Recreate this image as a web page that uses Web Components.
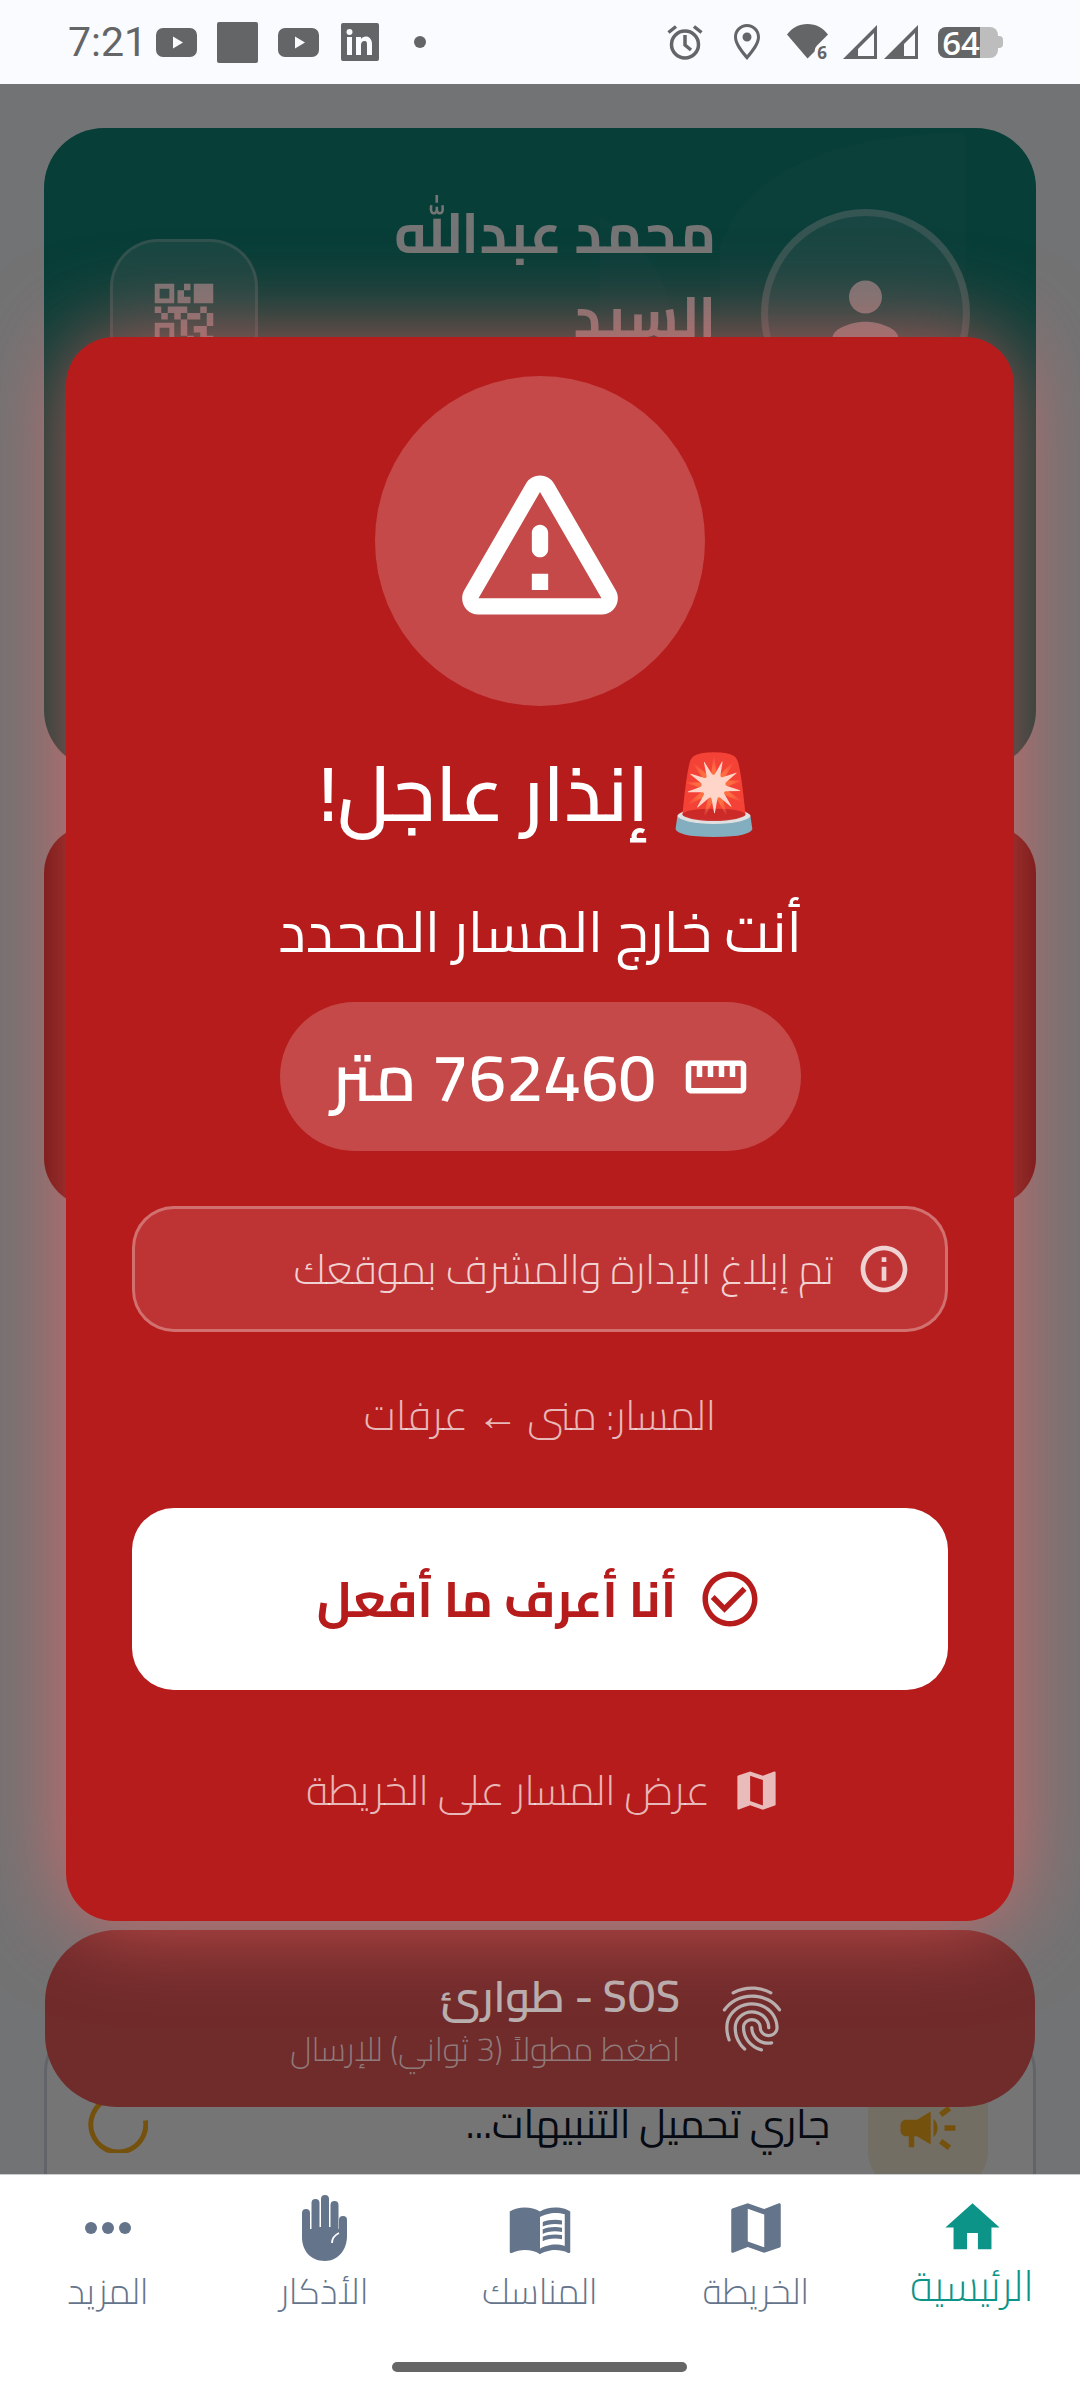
<!doctype html>
<html lang="ar" dir="rtl">
<head>
<meta charset="utf-8">
<title>إنذار عاجل</title>
<style>
  html, body { margin: 0; padding: 0; }
  body {
    width: 1080px;
    height: 2400px;
    display: flex;
    flex-direction: column;
    overflow: hidden;
    background: #fff;
    font-family: "Cairo", "Noto Sans Arabic", "Noto Sans", sans-serif;
  }
  svg { display: block; fill: currentColor; }
</style>
</head>
<body>

<status-bar></status-bar>

<app-main>
  <home-screen>
    <hero-card slot="top"></hero-card>
    <div slot="top" style="height:381px;margin-top:55px;border-radius:48px;background:#c91e18"></div>
    <alert-card slot="bottom"></alert-card>
  </home-screen>
  <alarm-overlay>
    <alarm-modal></alarm-modal>
    <sos-bar></sos-bar>
  </alarm-overlay>
</app-main>

<bottom-nav>
  <nav-item label="الرئيسية" active>
    <svg width="65" height="65" viewBox="0 0 24 24"><path d="M10 20v-6h4v6h5v-8h3L12 3 2 12h3v8z"/></svg>
  </nav-item>
  <nav-item label="الخريطة">
    <svg width="66" height="66" viewBox="0 0 24 24"><path d="M20.5 3l-.16.03L15 5.1 9 3 3.36 4.9c-.21.07-.36.25-.36.48V20.5c0 .28.22.5.5.5l.16-.03L9 18.9l6 2.1 5.64-1.9c.21-.07.36-.25.36-.48V3.5c0-.28-.22-.5-.5-.5zM15 19l-6-2.11V5l6 2.11V19z"/></svg>
  </nav-item>
  <nav-item label="المناسك">
    <svg width="66" height="66" viewBox="0 0 24 24"><path d="M21 5c-1.11-.35-2.33-.5-3.5-.5-1.95 0-4.05.4-5.5 1.5-1.45-1.1-3.55-1.5-5.5-1.5S2.45 4.9 1 6v14.65c0 .25.25.5.5.5.1 0 .15-.05.25-.05C3.1 20.45 5.05 20 6.5 20c1.95 0 4.05.4 5.5 1.5 1.35-.85 3.8-1.5 5.5-1.5 1.65 0 3.35.3 4.75 1.05.1.05.15.05.25.05.25 0 .5-.25.5-.5V6c-.6-.45-1.25-.75-2-1zm0 13.5c-1.1-.35-2.3-.5-3.5-.5-1.7 0-4.15.65-5.5 1.5V8c1.35-.85 3.8-1.5 5.5-1.5 1.2 0 2.4.15 3.5.5v11.5z"/><path d="M17.5 10.5c.88 0 1.73.09 2.5.26V9.24c-.79-.15-1.64-.24-2.5-.24-1.7 0-3.24.29-4.5.83v1.66c1.13-.64 2.7-.99 4.5-.99zM13 12.49v1.66c1.13-.64 2.7-.99 4.5-.99.88 0 1.73.09 2.5.26V11.9c-.79-.15-1.64-.24-2.5-.24-1.7 0-3.24.3-4.5.83zM17.5 14.33c-1.7 0-3.24.29-4.5.83v1.66c1.13-.64 2.7-.99 4.5-.99.88 0 1.73.09 2.5.26v-1.52c-.79-.16-1.64-.24-2.5-.24z"/></svg>
  </nav-item>
  <nav-item label="الأذكار">
    <svg width="66" height="66" viewBox="-11 0 66 66"><path d="M0 18a4 4 0 0 1 8 0v16h1.500V8a4 4 0 0 1 8 0v24h1.500V4a4 4 0 0 1 8 0v28h1.500V10a4 4 0 0 1 8 0v24l.5 0V25a4 4 0 0 1 8 0v16c0 14-9 25-22 25C8 66 0 55 0 42z"/><path d="M30 48c0-5 3-8 7-10" fill="none" stroke="#fff" stroke-width="1.800"/></svg>
  </nav-item>
  <nav-item label="المزيد">
    <svg width="66" height="66" viewBox="0 0 66 66"><circle cx="16" cy="33" r="6"/><circle cx="33" cy="33" r="6"/><circle cx="50" cy="33" r="6"/></svg>
  </nav-item>
</bottom-nav>

<script>
// small helper so every element is just: tag + template string
function defineEl(tag, html) {
  const tpl = document.createElement('template');
  tpl.innerHTML = html;
  customElements.define(tag, class extends HTMLElement {
    constructor() {
      super();
      this.attachShadow({ mode: 'open' });
      this.shadowRoot.appendChild(tpl.content.cloneNode(true));
    }
  });
}

defineEl('status-bar', `
  <style>
    :host {
      display: flex;
      flex: none;
      direction: ltr;
      justify-content: space-between;
      height: 84px;
      background: #fafbfe;
      color: #646566;
      font-family: "Roboto", sans-serif;
      padding: 0 77px 0 68px;
      box-sizing: border-box;
    }
    .side { display: flex; align-items: center; height: 84px; }
    svg { display: block; fill: currentColor; flex: none; overflow: visible; }
    .time { font-size: 41px; line-height: 84px; width: 88px; }
    .batt {
      position: relative;
      width: 60px;
      height: 31px;
      border-radius: 8px;
      margin-left: 20px;
      background: linear-gradient(90deg, #646566 42px, #bdbdbe 42px);
    }
    .batt span {
      display: block;
      text-align: center;
      width: 60px;
      margin-left: -7px;
      color: #fff;
      font: 600 33px/31px "Open Sans", sans-serif;
    }
    .nub { width: 5px; height: 12px; background: #bdbdbe; border-radius: 0 4px 4px 0; }
  </style>
  <div class="side">
    <span class="time">7:21</span>
    <svg width="41" height="29" viewBox="0 0 41 29" style="margin-right:20px"><path fill-rule="evenodd" d="M7 0h27a7 7 0 0 1 7 7v15a7 7 0 0 1-7 7H7a7 7 0 0 1-7-7V7a7 7 0 0 1 7-7zM17 8.500v12l10-6z"/></svg>
    <svg width="41" height="41" viewBox="0 0 41 41" style="margin-right:20px"><rect width="41" height="41" rx="2"/></svg>
    <svg width="41" height="29" viewBox="0 0 41 29" style="margin-right:22px"><path fill-rule="evenodd" d="M7 0h27a7 7 0 0 1 7 7v15a7 7 0 0 1-7 7H7a7 7 0 0 1-7-7V7a7 7 0 0 1 7-7zM17 8.500v12l10-6z"/></svg>
    <svg width="38" height="38" viewBox="0 0 38 38" style="margin-right:35px"><path fill-rule="evenodd" d="M2 0h34a2 2 0 0 1 2 2v34a2 2 0 0 1-2 2H2a2 2 0 0 1-2-2V2a2 2 0 0 1 2-2zM6 14v18h5V14zM8.500 6a3 3 0 1 0 0 6 3 3 0 0 0 0-6zM15 14v18h5V22c0-2 1-4 3.500-4S26 20 26 22v10h5V21c0-5-3-7.500-6-7.500-2.500 0-4 1-5 2.500v-2z"/></svg>
    <svg width="12" height="12" viewBox="0 0 12 12"><circle cx="6" cy="6" r="6"/></svg>
  </div>
  <div class="side">
    <svg width="36" height="36" viewBox="0 0 36 36" style="margin-right:31px"><g fill="none" stroke="currentColor" stroke-width="3.500"><circle cx="18" cy="20.500" r="13.500"/><path d="M18 11v10l6 5"/><path d="M1.500 8.500 9 2.500M34.500 8.500 27 2.500"/></g></svg>
    <svg width="26" height="36" viewBox="0 0 26 36" style="margin-right:27px"><path fill-rule="evenodd" d="M13 0c7 0 13 5.500 13 13 0 7-6 15-13 23C6 28 0 20 0 13 0 5.500 6 0 13 0zm0 3C7.500 3 3 7.500 3 13c0 5.500 5 12 10 18 5-6 10-12.500 10-18C23 7.500 18.500 3 13 3zm0 5.500a4.500 4.500 0 1 1 0 9 4.500 4.500 0 0 1 0-9z"/></svg>
    <svg width="41" height="36" viewBox="0 0 41 36" style="margin-right:15px"><path d="M0 10.500C5 4 12 0 20.500 0S36 4 41 10.500L30 21.500a8 8 0 0 0-2.500 6L20.500 34.500z"/><text x="35" y="35" font-family="Open Sans, sans-serif" font-size="17" font-weight="700" text-anchor="middle">6</text></svg>
    <svg width="34" height="34" viewBox="0 0 34 34" style="margin-right:7px"><path fill-rule="evenodd" d="M34 0v34H0zM31 8 15 24v7h16z"/></svg>
    <svg width="34" height="34" viewBox="0 0 34 34"><path fill-rule="evenodd" d="M34 0v34H0zM31 8 20 19v12h11z"/></svg>
    <div class="batt"><span>64</span></div>
    <div class="nub"></div>
  </div>
`);

defineEl('app-main', `
  <style>
    :host {
      display: block;
      flex: none;
      height: 2090px;
      position: relative;
      overflow: hidden;
      background: #f8fafc;
    }
  </style>
  <slot></slot>
`);

defineEl('home-screen', `
  <style>
    :host { display: flex; flex-direction: column; padding: 44px 44px 0; }
    .bottom { margin-top: 818px; }
  </style>
  <slot name="top"></slot>
  <div class="bottom"><slot name="bottom"></slot></div>
`);

defineEl('hero-card', `
  <style>
    :host {
      display: flex;
      align-items: flex-start;
      height: 642px;
      padding: 81px 66px 0;
      box-sizing: border-box;
      position: relative;
      overflow: hidden;
      border-radius: 60px;
      background: #10877b;
      color: #fff;
    }
    svg { display: block; fill: currentColor; }
    .decor { position: absolute; top: 0; left: 0; fill: rgba(255,255,255,.03); }
    .avatar {
      width: 209px;
      height: 209px;
      box-sizing: border-box;
      flex: none;
      display: flex;
      align-items: center;
      justify-content: center;
      border-radius: 50%;
      border: 7px solid rgba(255,255,255,.3);
      background: rgba(255,255,255,.14);
      position: relative;
    }
    .name {
      flex: 1;
      margin: -18px 45px 0 93px;
      font-size: 56px;
      font-weight: 700;
      line-height: 84px;
    }
    .qr {
      width: 148px;
      height: 148px;
      margin-top: 30px;
      flex: none;
      display: flex;
      align-items: center;
      justify-content: center;
      box-sizing: border-box;
      border-radius: 48px;
      border: 3px solid rgba(255,255,255,.25);
      background: rgba(255,255,255,.15);
      position: relative;
    }
  </style>
  <svg class="decor" width="992" height="642" viewBox="0 0 992 642"><path d="M556 642V90c30 10 75 60 75 120v432zM676 642V120C700 40 800 5 921 5v637z"/></svg>
  <div class="avatar"><svg width="99" height="99" viewBox="0 0 24 24"><path d="M12 12c2.210 0 4-1.790 4-4s-1.790-4-4-4-4 1.790-4 4 1.790 4 4 4zm0 2c-2.670 0-8 1.340-8 4v2h16v-2c0-2.660-5.330-4-8-4z"/></svg></div>
  <div class="name">محمد عبدالله السيد</div>
  <div class="qr"><svg width="78" height="78" viewBox="0 0 24 24"><path d="M15 21h-2v-2h2v2zm-2-7h-2v5h2v-5zm8-2h-2v4h2v-4zm-2-2h-2v2h2v-2zM7 12H5v2h2v-2zm-2-2H3v2h2v-2zm7-5h2V3h-2v2zm-7.500-.5v3h3v-3h-3zM9 9H3V3h6v6zm-4.500 10.500v-3h3v3h-3zM9 15H3v6h6v-6zm10.500-10.500v3h-3v-3h3zM21 9h-6V3h6v6zm-2 10v-3h-4v2h2v3h4v-2h-2zm-2-7h-4v2h4v-2zm-4-2H7v2h2v2h2v-2h2v-2zm1-1V7h-2V5h-2v4h4z"/></svg></div>
`);

defineEl('alert-card', `
  <style>
    :host {
      display: flex;
      align-items: center;
      height: 208px;
      padding: 0 45px 0 41px;
      box-sizing: border-box;
      border: 3px solid #d5dbe6;
      border-radius: 48px;
      background: #fff;
      gap: 38px;
    }
    svg { display: block; }
    .box {
      width: 120px;
      height: 120px;
      flex: none;
      display: flex;
      align-items: center;
      justify-content: center;
      border-radius: 36px;
      background: #f9f0d8;
      color: #ffb020;
    }
    .text { flex: 1; font-size: 40px; line-height: 66px; color: #0f172a; margin-top: -8px; }
    .spin { flex: none; margin-top: -10px; }
  </style>
  <div class="box"><svg width="66" height="66" viewBox="0 0 24 24" fill="currentColor"><path d="M18 11v2h4v-2h-4zm-2 6.610c.960.710 2.210 1.650 3.200 2.390.400-.530.800-1.070 1.200-1.600-.990-.740-2.240-1.680-3.200-2.400-.400.540-.800 1.080-1.200 1.610zM20.400 5.600c-.400-.530-.800-1.070-1.200-1.600-.990.740-2.240 1.680-3.200 2.400.400.530.800 1.070 1.200 1.600.960-.720 2.210-1.650 3.200-2.400zM4 9c-1.100 0-2 .9-2 2v2c0 1.100.9 2 2 2h1v4h2v-4h1l5 3V6L8 9H4zm11.500 3c0-1.330-.580-2.530-1.500-3.350v6.690c.920-.810 1.500-2.010 1.500-3.340z"/></svg></div>
  <div class="text">جاري تحميل التنبيهات...</div>
  <svg class="spin" width="60" height="60" viewBox="0 0 60 60"><path d="M19 6.500A27.500 27.500 0 1 0 57.500 27.500" fill="none" stroke="#ffb020" stroke-width="5"/></svg>
`);

defineEl('alarm-overlay', `
  <style>
    :host {
      position: absolute;
      top: 0;
      right: 0;
      bottom: 0;
      left: 0;
      display: flex;
      flex-direction: column;
      align-items: center;
      padding-top: 253px;
      box-sizing: border-box;
      background: rgba(0,0,0,.54);
    }
  </style>
  <slot></slot>
`);

defineEl('alarm-modal', `
  <style>
    :host {
      display: flex;
      flex-direction: column;
      align-items: center;
      width: 948px;
      padding: 39px 66px 101px;
      box-sizing: border-box;
      position: relative;
      z-index: 1;
      border-radius: 48px;
      background: #b71c1c;
      box-shadow: 0 0 90px rgba(255,100,100,.72);
      color: #fff;
    }
    svg { display: block; fill: currentColor; flex: none; }
    .circle {
      width: 330px;
      height: 330px;
      display: flex;
      align-items: center;
      justify-content: center;
      border-radius: 50%;
      background: rgba(255,255,255,.2);
    }
    h1 {
      margin: 42px 0 0;
      font-size: 77px;
      font-weight: 650;
      line-height: 90px;
    }
    .sub { margin-top: 54px; font-size: 57px; line-height: 80px; }
    .pill {
      margin-top: 30px;
      height: 149px;
      width: 521px;
      display: flex;
      align-items: center;
      justify-content: center;
      gap: 27px;
      border-radius: 75px;
      background: rgba(255,255,255,.2);
      font-size: 67px;
      font-weight: 650;
    }
    .info {
      margin-top: 55px;
      width: 100%;
      height: 126px;
      display: flex;
      align-items: center;
      gap: 22px;
      padding: 0 33px;
      box-sizing: border-box;
      border: 3px solid rgba(255,255,255,.3);
      border-radius: 42px;
      background: rgba(255,255,255,.1);
      color: rgba(255,255,255,.78);
      font-size: 41.500px;
      font-weight: 300;
    }
    .route { margin-top: 53px; font-size: 41.500px; font-weight: 300; line-height: 60px; color: rgba(255,255,255,.7); }
    .ok {
      margin-top: 63px;
      width: 100%;
      height: 182px;
      display: flex;
      align-items: center;
      justify-content: center;
      gap: 21px;
      border-radius: 42px;
      background: #fff;
      color: #b71c1c;
      font-size: 49.500px;
      font-weight: 700;
    }
    .link {
      margin-top: 70px;
      height: 60px;
      display: flex;
      align-items: center;
      justify-content: center;
      gap: 21px;
      padding-left: 8px;
      color: rgba(255,255,255,.7);
      font-size: 41.500px;
      font-weight: 300;
    }
  </style>
  <div class="circle"><svg width="196" height="196" viewBox="0 0 24 24"><path fill-rule="evenodd" d="M12 5.990 19.530 19H4.470L12 5.990M2.740 18c-.770 1.330.190 3 1.730 3h15.060c1.540 0 2.500-1.670 1.730-3L13.730 4.990c-.770-1.330-2.690-1.330-3.460 0L2.740 18zM11 11v2c0 .550.450 1 1 1s1-.450 1-1v-2c0-.550-.450-1-1-1s-1 .450-1 1zm0 5h2v2h-2z"/></svg></div>
  <h1>🚨 إنذار عاجل!</h1>
  <div class="sub">أنت خارج المسار المحدد</div>
  <div class="pill">
    <svg width="66" height="66" viewBox="0 0 24 24"><path d="M21 6H3c-1.100 0-2 .9-2 2v8c0 1.100.9 2 2 2h18c1.100 0 2-.9 2-2V8c0-1.100-.9-2-2-2zm0 10H3V8h2v4h2V8h2v4h2V8h2v4h2V8h2v4h2V8h2v8z"/></svg>
    <span>762460 متر</span>
  </div>
  <div class="info">
    <svg width="56" height="56" viewBox="0 0 24 24"><path d="M11 7h2v2h-2zm0 4h2v6h-2zm1-9C6.480 2 2 6.480 2 12s4.480 10 10 10 10-4.480 10-10S17.520 2 12 2zm0 18c-4.410 0-8-3.590-8-8s3.590-8 8-8 8 3.590 8 8-3.590 8-8 8z"/></svg>
    <span>تم إبلاغ الإدارة والمشرف بموقعك</span>
  </div>
  <div class="route">المسار: منى ← عرفات</div>
  <div class="ok">
    <svg width="66" height="66" viewBox="0 0 24 24"><path d="M16.590 7.580 10 14.170l-3.590-3.580L5 12l5 5 8-8zM12 2C6.480 2 2 6.480 2 12s4.480 10 10 10 10-4.480 10-10S17.520 2 12 2zm0 18c-4.420 0-8-3.580-8-8s3.580-8 8-8 8 3.580 8 8-3.580 8-8 8z"/></svg>
    <span>أنا أعرف ما أفعل</span>
  </div>
  <div class="link">
    <svg width="51" height="51" viewBox="0 0 24 24"><path d="M20.500 3l-.16.03L15 5.100 9 3 3.360 4.900c-.21.07-.36.25-.36.48V20.500c0 .28.22.5.5.5l.16-.03L9 18.900l6 2.100 5.640-1.900c.21-.07.36-.25.36-.48V3.500c0-.28-.22-.5-.5-.5zM15 19l-6-2.110V5l6 2.110V19z"/></svg>
    <span>عرض المسار على الخريطة</span>
  </div>
`);

defineEl('sos-bar', `
  <style>
    :host {
      display: flex;
      align-items: center;
      gap: 33px;
      width: 990px;
      height: 177px;
      margin-top: 9px;
      padding: 0 244px 0 0;
      box-sizing: border-box;
      border-radius: 72px;
      background: #702b2b;
      color: #b8b0b0;
    }
    svg { display: block; fill: currentColor; flex: none; }
    .title { font-size: 44px; font-weight: 600; line-height: 60px; }
    .hint { font-size: 33px; font-weight: 300; line-height: 46px; color: #8f7a7a; }
  </style>
  <svg width="78" height="78" viewBox="0 0 24 24"><path d="M17.810 4.470c-.08 0-.16-.02-.23-.06C15.660 3.420 14 3 12.010 3c-1.980 0-3.860.47-5.570 1.410-.24.13-.54.04-.68-.2-.13-.24-.04-.55.2-.68C7.820 2.520 9.860 2 12.010 2c2.130 0 3.990.47 6.030 1.520.25.13.34.43.21.67-.09.18-.26.28-.44.28zM3.500 9.720c-.1 0-.2-.03-.29-.09-.23-.16-.28-.47-.12-.7.990-1.400 2.250-2.500 3.750-3.270C9.980 4.040 14 4.030 17.150 5.650c1.500.77 2.760 1.860 3.750 3.250.16.22.11.54-.12.7-.23.16-.54.11-.7-.12-.9-1.260-2.040-2.250-3.390-2.940-2.870-1.470-6.540-1.470-9.400.01-1.360.7-2.500 1.700-3.400 2.960-.08.14-.23.21-.39.21zm6.250 12.070c-.13 0-.26-.05-.35-.15-.87-.87-1.340-1.430-2.010-2.640-.69-1.230-1.050-2.730-1.050-4.340 0-2.970 2.540-5.390 5.660-5.390s5.660 2.420 5.660 5.390c0 .28-.22.5-.5.5s-.5-.22-.5-.5c0-2.420-2.090-4.390-4.660-4.390-2.570 0-4.660 1.970-4.660 4.390 0 1.440.32 2.770.93 3.850.64 1.150 1.080 1.640 1.850 2.420.19.2.19.51 0 .71-.11.1-.24.15-.37.15zm7.170-1.850c-1.190 0-2.240-.3-3.100-.89-1.490-1.010-2.380-2.650-2.380-4.390 0-.28.22-.5.5-.5s.5.22.5.5c0 1.410.72 2.740 1.940 3.560.71.48 1.540.71 2.540.71.24 0 .64-.03 1.040-.1.27-.05.53.13.58.41.05.27-.13.53-.41.58-.57.11-1.070.12-1.210.12zM14.910 22c-.04 0-.09-.01-.13-.02-1.590-.44-2.630-1.030-3.720-2.100-1.400-1.390-2.170-3.240-2.170-5.220 0-1.620 1.380-2.940 3.080-2.940 1.700 0 3.080 1.320 3.080 2.940 0 1.070.93 1.940 2.080 1.940s2.080-.87 2.080-1.940c0-3.770-3.250-6.830-7.250-6.830-2.840 0-5.440 1.580-6.610 4.030-.39.81-.59 1.760-.59 2.800 0 .78.07 2.010.67 3.610.1.26-.03.55-.29.64-.26.1-.55-.04-.64-.29-.49-1.310-.73-2.610-.73-3.960 0-1.200.23-2.290.68-3.240 1.330-2.790 4.280-4.600 7.510-4.600 4.550 0 8.250 3.510 8.250 7.830 0 1.620-1.380 2.940-3.080 2.940s-3.080-1.320-3.080-2.940c0-1.070-.93-1.940-2.080-1.940s-2.080.87-2.080 1.940c0 1.710.66 3.310 1.870 4.510.95.94 1.860 1.460 3.270 1.850.27.07.42.35.35.61-.05.23-.26.38-.47.38z"/></svg>
  <div>
    <div class="title">SOS - طوارئ</div>
    <div class="hint">اضغط مطولاً (3 ثواني) للإرسال</div>
  </div>
`);

defineEl('bottom-nav', `
  <style>
    :host {
      display: flex;
      flex: 1;
      position: relative;
      align-items: flex-start;
      background: #fff;
      border-top: 1px solid #c9cbcc;
      box-sizing: border-box;
      padding-top: 20px;
    }
    .bar {
      position: absolute;
      left: 392px;
      bottom: 28px;
      width: 295px;
      height: 10px;
      border-radius: 5px;
      background: #666;
    }
  </style>
  <slot></slot>
  <div class="bar"></div>
`);

class NavItem extends HTMLElement {
  constructor() {
    super();
    this.attachShadow({ mode: 'open' });
    const active = this.hasAttribute('active');
    this.shadowRoot.innerHTML = `
      <style>
        :host {
          display: flex;
          flex: 1;
          flex-direction: column;
          align-items: center;
          color: ${active ? '#0d9488' : '#64748b'};
        }
        span {
          display: block;
          margin-top: ${active ? '1px' : '5px'};
          font-size: ${active ? '43px' : '36px'};
          font-weight: 300;
          line-height: 50px;
        }
      </style>
      <slot></slot>
      <span>${this.getAttribute('label')}</span>
    `;
  }
}
customElements.define('nav-item', NavItem);
</script>
</body>
</html>
